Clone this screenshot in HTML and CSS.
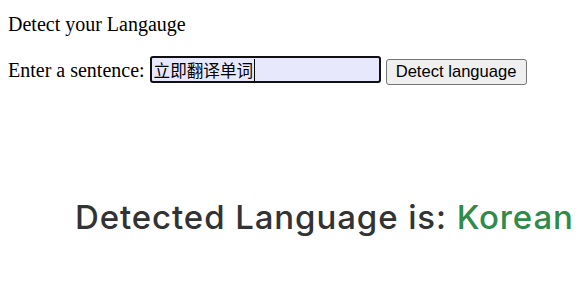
FILE: index.html
```html
<!DOCTYPE html>
<html lang="en">
<head>
<meta charset="utf-8">
<title>Detect your Langauge</title>
<link rel="stylesheet" href="styles.css">
</head>
<body>
<main class="page">
  <p class="title">Detect your Langauge</p>
  <form class="row">
    <label class="label" for="sentence">Enter a sentence:</label>
    <span class="field-wrap">
      <input class="field" id="sentence" type="text" value="立即翻译单词">
    </span>
    <button class="btn" type="button">Detect language</button>
  </form>
  <h2 class="result">Detected Language is: <span class="lang">Korean</span></h2>
</main>
</body>
</html>
```
FILE: styles.css
```css
html, body {
  margin: 0;
  padding: 0;
  background: #ffffff;
}

.page {
  padding: 0 8px;
  font-family: "Liberation Serif", "Times New Roman", serif;
  font-size: 20px;
  color: #000;
}

.title {
  margin: 13px 0 0;
  line-height: 23px;
}

.row {
  display: flex;
  align-items: baseline;
  gap: 5px;
  margin: 20px 0 0;
}

.label {
  line-height: 23px;
}

.field-wrap {
  position: relative;
  display: inline-block;
}

.field-wrap::after {
  content: "";
  position: absolute;
  left: 104px;
  top: 3px;
  width: 1px;
  height: 22px;
  background: #000;
}

.field {
  box-sizing: border-box;
  width: 231px;
  height: 27px;
  margin: 0;
  padding: 1px 2px;
  border: 2px solid #101010;
  border-radius: 3px;
  background: #e8e8fd;
  font-family: "Noto Sans CJK SC", "Liberation Sans", sans-serif;
  font-size: 16.6px;
  color: #000;
  outline: none;
}

.btn {
  box-sizing: border-box;
  width: 141px;
  height: 26px;
  margin: 0;
  padding: 1px 6px;
  border: 1px solid #767676;
  border-radius: 3px;
  background: #efefef;
  font-family: "Liberation Sans", Arial, sans-serif;
  font-size: 16.6px;
  color: #000;
}

.result {
  margin: 109px 0 0 67px;
  font-family: "Inter", "Open Sans", sans-serif;
  font-weight: 500;
  font-size: 33px;
  line-height: 46px;
  letter-spacing: 0.9px;
  color: #333333;
  white-space: nowrap;
}

.lang {
  color: #2e8b4a;
}
```
